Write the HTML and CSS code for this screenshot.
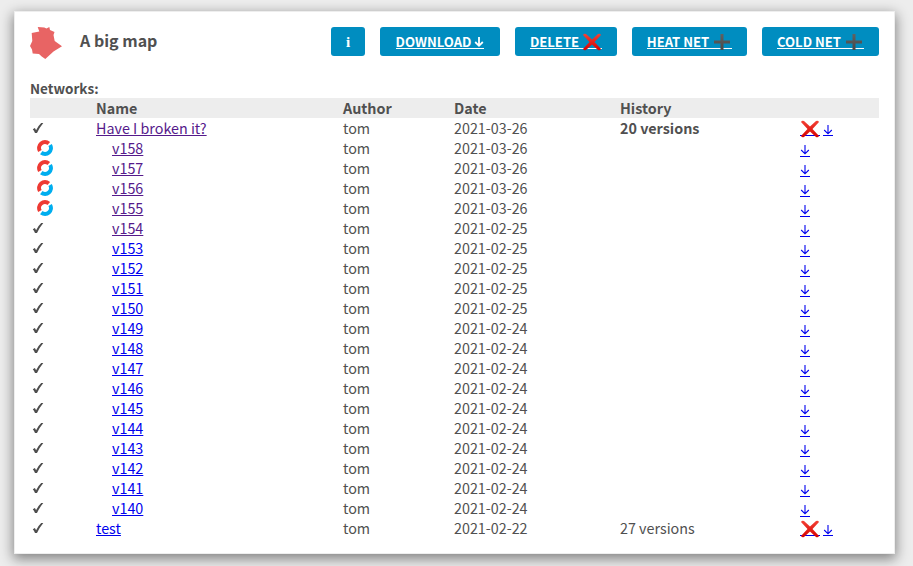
FILE: index.html
```html
<!DOCTYPE html>
<html lang="en">
<head>
<meta charset="utf-8">
<title>A big map</title>
<link rel="stylesheet" href="styles.css">
</head>
<body>
<svg class="defs" aria-hidden="true">
<defs>
<linearGradient id="red" x1="0" y1="0" x2="0" y2="1"><stop offset="0" stop-color="#f44336"/><stop offset="1" stop-color="#d50000"/></linearGradient>
<linearGradient id="grey" x1="0" y1="0" x2="0" y2="1"><stop offset="0" stop-color="#616161"/><stop offset="1" stop-color="#484848"/></linearGradient>
<symbol id="cross" viewBox="0 0 20 18"><path fill="url(#red)" d="M1 2 Q2 0 4 1 L10 6.600 L16 1 Q18 0 19 2 L12.500 9 L19 16 Q18 18 16 17 L10 11.400 L4 17 Q2 18 1 16 L7.500 9Z"/></symbol>
<symbol id="plus" viewBox="0 0 18 18"><path fill="url(#grey)" d="M7.500 1h3v6.500H17v3h-6.500V17h-3v-6.500H1v-3h6.500z"/></symbol>
<symbol id="down" viewBox="0 0 10 12"><path d="M5 1V10M1.200 6L5 9.800L8.800 6" fill="none" stroke="currentColor"/></symbol>
<symbol id="check" viewBox="0 0 12 12"><path fill="#4d4d4d" d="M0.800 7.200L2.900 5.900L4.100 8.200Q6 4 9.200 1H11.300Q7.500 5.500 5 11H3Q2.200 9 .8 7.200Z"/></symbol>
<symbol id="ring" viewBox="0 0 16 16"><g fill="none" stroke-width="4"><path stroke="#ee3a33" d="M2.900 11A5.900 5.900 0 0 1 11.800 3.500"/><path stroke="#00aeef" d="M13.100 5A5.900 5.900 0 0 1 4.300 12.600"/></g></symbol>
</defs>
</svg>
<main class="card">
<header class="head">
<svg class="logo" viewBox="0 0 32 32"><path d="M7.700 0L14.300.6L16.500 1.600L19.300 0L20 3L24.500 5L23.500 8L24.700 14L32 19.300L23.500 24.500L15.300 32L11.700 29.500L9 27L2.700 26.500L2 22.500L0 19L2.300 14L1.700 6L9.300 4.500Z"/></svg>
<h1>A big map</h1>
<nav>
<a class="btn info">i</a>
<a class="btn b1"><u>DOWNLOAD <svg class="down"><use href="#down"/></svg></u></a>
<a class="btn b2"><u>DELETE <svg class="emo"><use href="#cross"/></svg></u></a>
<a class="btn b3"><u>HEAT NET <svg class="emo"><use href="#plus"/></svg></u></a>
<a class="btn b4"><u>COLD NET <svg class="emo"><use href="#plus"/></svg></u></a>
</nav>
</header>
<h2>Networks:</h2>
<section id="table">
<div class="row th"><span></span><span>Name</span><span>Author</span><span>Date</span><span>History</span><span></span></div>
</section>
</main>
<script src="rows.js"></script>
</body>
</html>
```
FILE: rows.js
```js
const table = document.getElementById('table');
const icon = (name, cls) => `<svg class="${cls || name}"><use href="#${name}"/></svg>`;
const down = `<a class="dl">${icon('down')}</a>`;

function addRow(name, date, opts) {
  const row = document.createElement('div');
  row.className = 'row';
  row.innerHTML =
    `<span>${icon(opts.running ? 'ring' : 'check')}</span>` +
    `<span class="${opts.head ? '' : 'sub'}"><a class="${opts.visited ? 'visited' : ''}">${name}</a></span>` +
    `<span>tom</span><span>${date}</span>` +
    `<span class="${opts.bold ? 'bold' : ''}">${opts.history || ''}</span>` +
    `<span class="act">${opts.head ? `<a class="rm">${icon('cross')}</a>` : ''}${down}</span>`;
  table.append(row);
}

addRow('Have I broken it?', '2021-03-26', { head: true, visited: true, bold: true, history: '20 versions' });
for (let v = 158; v >= 140; v--) {
  const date = v >= 155 ? '2021-03-26' : v >= 150 ? '2021-02-25' : '2021-02-24';
  addRow('v' + v, date, { running: v >= 155, visited: v >= 154 });
}
addRow('test', '2021-02-22', { head: true, history: '27 versions' });
```
FILE: styles.css
```css
* { box-sizing: border-box; }
body { margin: 0; padding: 11px 18px 12px 14px; height: 566px; overflow: hidden; background: #ededed; color: #505050; font: 14.330px/20px "Noto Sans CJK JP", sans-serif; }
.defs { position: absolute; width: 0; height: 0; }
.card { height: 543px; padding: 15px; background: #fff; border: 1px solid #eee; box-shadow: 0 4px 12px 1px rgba(0,0,0,.45); }
.head { display: flex; align-items: flex-start; height: 32px; }
.logo { width: 32px; height: 32px; fill: #e86464; }
h1 { margin: 0 0 0 18px; font-size: 16px; line-height: 26px; }
nav { display: flex; gap: 15px; margin-left: auto; }
.btn { display: flex; align-items: center; justify-content: center; height: 29px; border-radius: 3px; background: #008dc0; color: #fff; font-size: 13.100px; font-weight: 700; white-space: pre; }
.info { width: 34px; font-family: "Liberation Serif", serif; font-size: 15px; }
.b1 { width: 120px; } .b2 { width: 102px; } .b3 { width: 115px; } .b4 { width: 117px; }
.btn u { display: flex; align-items: center; height: 14px; margin-top: 1px; border-bottom: 1px solid #fff; text-decoration: none; }
.btn .down { width: 10px; height: 12px; stroke-width: 1.800; }
.emo { width: 20px; height: 18px; }
h2 { margin: 19px 0 0; font-size: 13.500px; line-height: 20px; }
.row { display: grid; grid-template-columns: 66px 247px 111px 166px 180px 1fr; height: 20px; }
.th { background: #ededed; font-weight: 700; }
.sub { padding-left: 16px; }
.row a { color: #00e; text-decoration: underline; }
.row a.visited { color: #551a8b; }
.bold { font-weight: 700; }
.check { display: block; width: 12px; height: 12px; margin: 4px 0 0 2px; }
.ring { display: block; width: 16px; height: 16px; margin: 2px 0 0 7px; }
.act { display: flex; gap: 3px; }
.act .dl { height: 18px; width: 10px; padding-top: 6px; border-bottom: 1px solid #00e; }
.row:nth-child(n+3):not(:last-child) .dl { height: 19px; }
.dl .down, .rm .cross { display: block; }
.dl .down { width: 10px; height: 12px; stroke-width: 1.100; }
.rm { height: 18px; border-bottom: 1px solid #00e; }
.rm .cross { width: 20px; height: 18px; margin-top: 2px; }
```
